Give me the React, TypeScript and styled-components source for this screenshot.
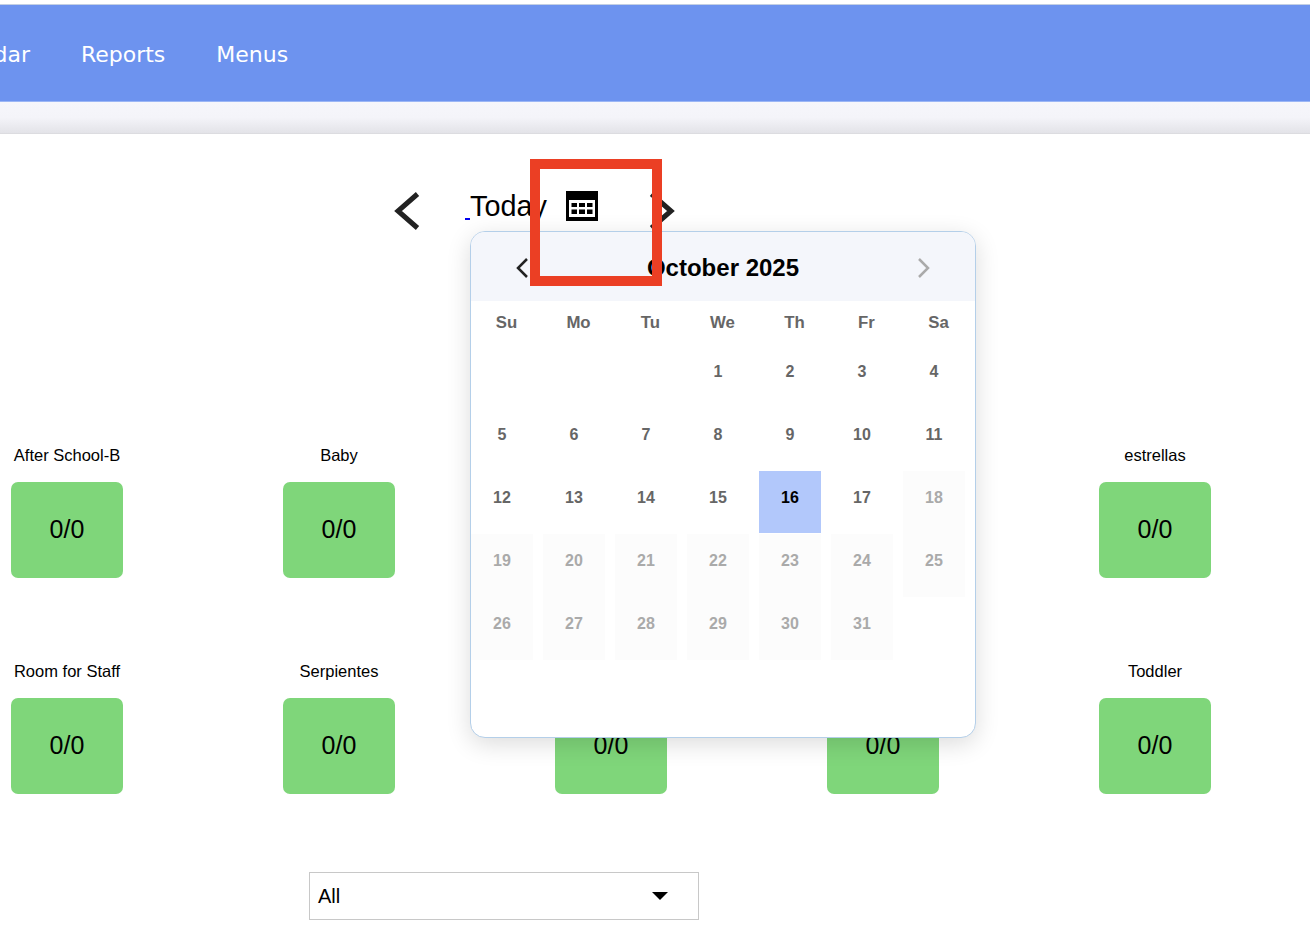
import React from "react";
import styled, { createGlobalStyle } from "styled-components";

const GlobalStyle = createGlobalStyle`
  html, body {
    margin: 0;
    padding: 0;
    background: #fff;
    font-family: "Liberation Sans", Arial, sans-serif;
  }
`;

const Page = styled.div`
  position: relative;
  width: 1310px;
  height: 942px;
  overflow: hidden;
  padding-top: 4px;
  box-sizing: border-box;
`;

const Header = styled.header`
  height: 98px;
  box-sizing: border-box;
  background: #6d93ef;
  border-top: 1px solid #c3cfe3;
  border-bottom: 1px solid #9bb6f5;
  display: flex;
  align-items: center;
  gap: 51px;
  padding-top: 3px;
  margin-left: -69px;
`;

const NavItem = styled.a`
  font-family: "DejaVu Sans", sans-serif;
  font-size: 22px;
  color: #fff;
  white-space: nowrap;
`;

const SubBar = styled.div`
  height: 32px;
  box-sizing: border-box;
  background: linear-gradient(#f6f6fb 0%, #f4f4f9 50%, #e3e3e8 100%);
  border-bottom: 1px solid #dcdce0;
`;

const DateBar = styled.div`
  display: flex;
  align-items: flex-start;
  height: 312px;
  padding: 55px 0 0 393px;
  box-sizing: border-box;
`;

const Chevron = styled.svg`
  width: 30px;
  height: 44px;
  flex: none;
`;

const TodayLink = styled.a`
  margin: 3px 0 0 42px;
  color: #0000ee;
  text-decoration: underline;
  font-size: 28.8px;
  line-height: 28px;
  word-spacing: -3px;
  white-space: pre;
`;

const TodayText = styled.span`
  display: inline-block;
  color: #000;
  background: #fff;
`;

const CalendarIcon = styled.svg`
  width: 32px;
  height: 30px;
  margin: 2px 0 0 19px;
  flex: none;
`;

const NextChevron = styled(Chevron)`
  margin-left: 49px;
`;

const RoomGrid = styled.div`
  display: grid;
  grid-template-columns: repeat(5, 112px);
  column-gap: 160px;
  row-gap: 84px;
  padding-left: 11px;
`;

const Room = styled.div`
  display: flex;
  flex-direction: column;
  align-items: center;
`;

const RoomName = styled.div`
  height: 36px;
  font-size: 16.5px;
  line-height: 18px;
  color: #000;
  white-space: nowrap;
`;

const RoomCount = styled.div`
  width: 112px;
  height: 96px;
  box-sizing: border-box;
  padding-bottom: 1px;
  border-radius: 7px;
  background: #7fd67a;
  color: #000;
  font-size: 25px;
  display: flex;
  align-items: center;
  justify-content: center;
`;

const SelectBox = styled.div`
  width: 390px;
  height: 48px;
  box-sizing: border-box;
  margin: 78px 0 0 309px;
  padding: 0 30px 0 8px;
  border: 1px solid #c8c8c8;
  display: flex;
  align-items: center;
  justify-content: space-between;
  font-size: 20px;
  color: #000;
`;

const Caret = styled.span`
  width: 0;
  height: 0;
  border-left: 8px solid transparent;
  border-right: 8px solid transparent;
  border-top: 8px solid #000;
`;

const Popover = styled.div`
  position: absolute;
  left: 470px;
  top: 231px;
  width: 506px;
  height: 507px;
  box-sizing: border-box;
  background: #fff;
  border: 1px solid #b4cfe9;
  border-radius: 15px;
  box-shadow: 0 6px 24px rgba(0, 0, 0, 0.14);
  overflow: hidden;
`;

const MonthHeader = styled.div`
  height: 69px;
  background: #f4f6fb;
  display: flex;
  align-items: center;
  justify-content: space-between;
  padding: 3px 41px 0 41px;
  box-sizing: border-box;
`;

const MonthTitle = styled.div`
  font-size: 24px;
  font-weight: 700;
  color: #000;
`;

const MonthArrow = styled.svg`
  width: 20px;
  height: 24px;
  flex: none;
`;

const WeekRow = styled.div`
  display: grid;
  grid-template-columns: repeat(7, 72px);
  height: 44px;
  align-items: center;
  margin-left: -0.5px;
`;

const WeekDay = styled.div`
  text-align: center;
  font-size: 16.8px;
  font-weight: 700;
  color: #666;
`;

const DayGrid = styled.div`
  display: grid;
  grid-template-columns: repeat(7, 72px);
  grid-auto-rows: 63px;
`;

const Day = styled.div<{ $state: "normal" | "selected" | "disabled" | "empty" }>`
  width: 62px;
  height: ${({ $state }) => ($state === "disabled" ? "63px" : "62px")};
  box-sizing: border-box;
  padding-bottom: ${({ $state }) => ($state === "disabled" ? "9px" : "8px")};
  display: flex;
  align-items: center;
  justify-content: center;
  font-size: 16px;
  font-weight: 700;
  background: ${({ $state }) =>
    $state === "selected"
      ? "#b2c8fb"
      : $state === "disabled"
        ? "#fcfcfc"
        : "transparent"};
  color: ${({ $state }) =>
    $state === "selected" ? "#000" : $state === "disabled" ? "#aaa" : "#666"};
`;

const Highlight = styled.div`
  position: absolute;
  left: 530px;
  top: 159px;
  width: 132px;
  height: 127px;
  box-sizing: border-box;
  border: 10px solid #eb3f24;
  pointer-events: none;
`;

const topRooms = ["After School-B", "Baby", "", "", "estrellas"];
const bottomRooms = ["Room for Staff", "Serpientes", "", "", "Toddler"];
const weekDays = ["Su", "Mo", "Tu", "We", "Th", "Fr", "Sa"];
const days = Array.from({ length: 31 }, (_, i) => i + 1);

function dayState(day: number) {
  if (day === 16) return "selected";
  return day >= 18 ? "disabled" : "normal";
}

export default function App() {
  return (
    <>
      <GlobalStyle />
      <Page>
        <Header>
          <NavItem>Calendar</NavItem>
          <NavItem>Reports</NavItem>
          <NavItem>Menus</NavItem>
        </Header>
        <SubBar />
        <DateBar>
          <Chevron viewBox="0 0 30 44">
            <path d="M24.5 5 L5 22 L24.5 39" fill="none" stroke="#222" strokeWidth="5" />
          </Chevron>
          <TodayLink>
            {" "}
            <TodayText>Today</TodayText>
          </TodayLink>
          <CalendarIcon viewBox="0 0 32 30">
            <path fillRule="evenodd" fill="#000" d="M0 0h32v30H0z M3 9v17h26V9z" />
            <path
              fill="#000"
              d="M5.5 12H11v4H5.5z M13 12h6v4h-6z M21 12h5.5v4H21z M5.5 18.5H11v4.5H5.5z M13 18.5h6v4.5h-6z M21 18.5h5.5v4.5H21z"
            />
          </CalendarIcon>
          <NextChevron viewBox="0 0 30 44">
            <path d="M4.5 5 L24 22 L4.5 39" fill="none" stroke="#222" strokeWidth="5" />
          </NextChevron>
        </DateBar>
        <RoomGrid>
          {[...topRooms, ...bottomRooms].map((name, i) => (
            <Room key={i}>
              <RoomName>{name}</RoomName>
              <RoomCount>0/0</RoomCount>
            </Room>
          ))}
        </RoomGrid>
        <SelectBox>
          All
          <Caret />
        </SelectBox>
        <Popover>
          <MonthHeader>
            <MonthArrow viewBox="0 0 20 24">
              <path d="M15 3 L6 12 L15 21" fill="none" stroke="#222" strokeWidth="2.5" />
            </MonthArrow>
            <MonthTitle>October 2025</MonthTitle>
            <MonthArrow viewBox="0 0 20 24">
              <path d="M5 3 L14 12 L5 21" fill="none" stroke="#aaa" strokeWidth="2.5" />
            </MonthArrow>
          </MonthHeader>
          <WeekRow>
            {weekDays.map((d) => (
              <WeekDay key={d}>{d}</WeekDay>
            ))}
          </WeekRow>
          <DayGrid>
            {[0, 1, 2].map((i) => (
              <Day key={`e${i}`} $state="empty" />
            ))}
            {days.map((d) => (
              <Day key={d} $state={dayState(d)}>
                {d}
              </Day>
            ))}
          </DayGrid>
        </Popover>
        <Highlight />
      </Page>
    </>
  );
}
